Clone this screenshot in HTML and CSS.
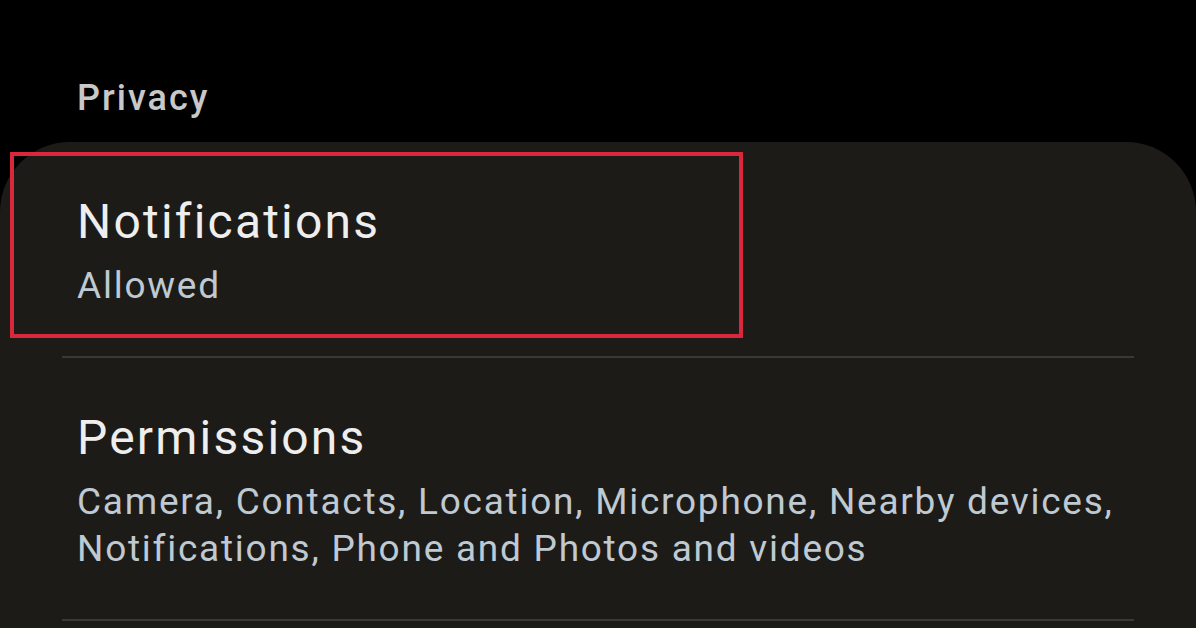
FILE: index.html
```html
<!DOCTYPE html>
<html lang="en">
<head>
<meta charset="utf-8">
<title>Privacy</title>
<link rel="stylesheet" href="styles.css">
</head>
<body>
  <div class="screen">
    <div class="section-label">Privacy</div>
    <div class="card">
      <div class="row row-highlighted">
        <div class="row-title">Notifications</div>
        <div class="row-sub">Allowed</div>
        <div class="highlight-box"></div>
      </div>
      <div class="divider"></div>
      <div class="row">
        <div class="row-title">Permissions</div>
        <div class="row-sub">Camera, Contacts, Location, Microphone, Nearby devices,<br>Notifications, Phone and Photos and videos</div>
      </div>
      <div class="divider"></div>
    </div>
  </div>
</body>
</html>
```

FILE: styles.css
```css
html, body {
  margin: 0;
  padding: 0;
  background: #000;
  height: 100%;
  overflow: hidden;
}

.screen {
  width: 1196px;
  height: 628px;
  overflow: hidden;
  font-family: Roboto, "Liberation Sans", sans-serif;
}

.section-label {
  padding: 0 0 0 77px;
  height: 142px;
  box-sizing: border-box;
  padding-top: 76px;
  font-size: 36px;
  line-height: 44px;
  letter-spacing: 2px;
  color: #c8c8c8;
  font-weight: 500;
}

.card {
  background: #1d1b18;
  border-radius: 70px 70px 0 0;
  height: 520px;
}

.row {
  position: relative;
  padding: 52px 77px 47px;
}

.row-title {
  font-size: 48px;
  line-height: 56px;
  letter-spacing: 2.2px;
  color: #eeeeee;
}

.row-sub {
  margin-top: 12px;
  font-size: 37px;
  line-height: 47px;
  letter-spacing: 1.75px;
  color: #bfc9d2;
}

.highlight-box {
  position: absolute;
  left: 10px;
  top: 10px;
  width: 733px;
  height: 186px;
  box-sizing: border-box;
  border: 4px solid #d9283c;
}

.divider {
  height: 2px;
  margin: 0 62px;
  background: #3b3936;
}
```
